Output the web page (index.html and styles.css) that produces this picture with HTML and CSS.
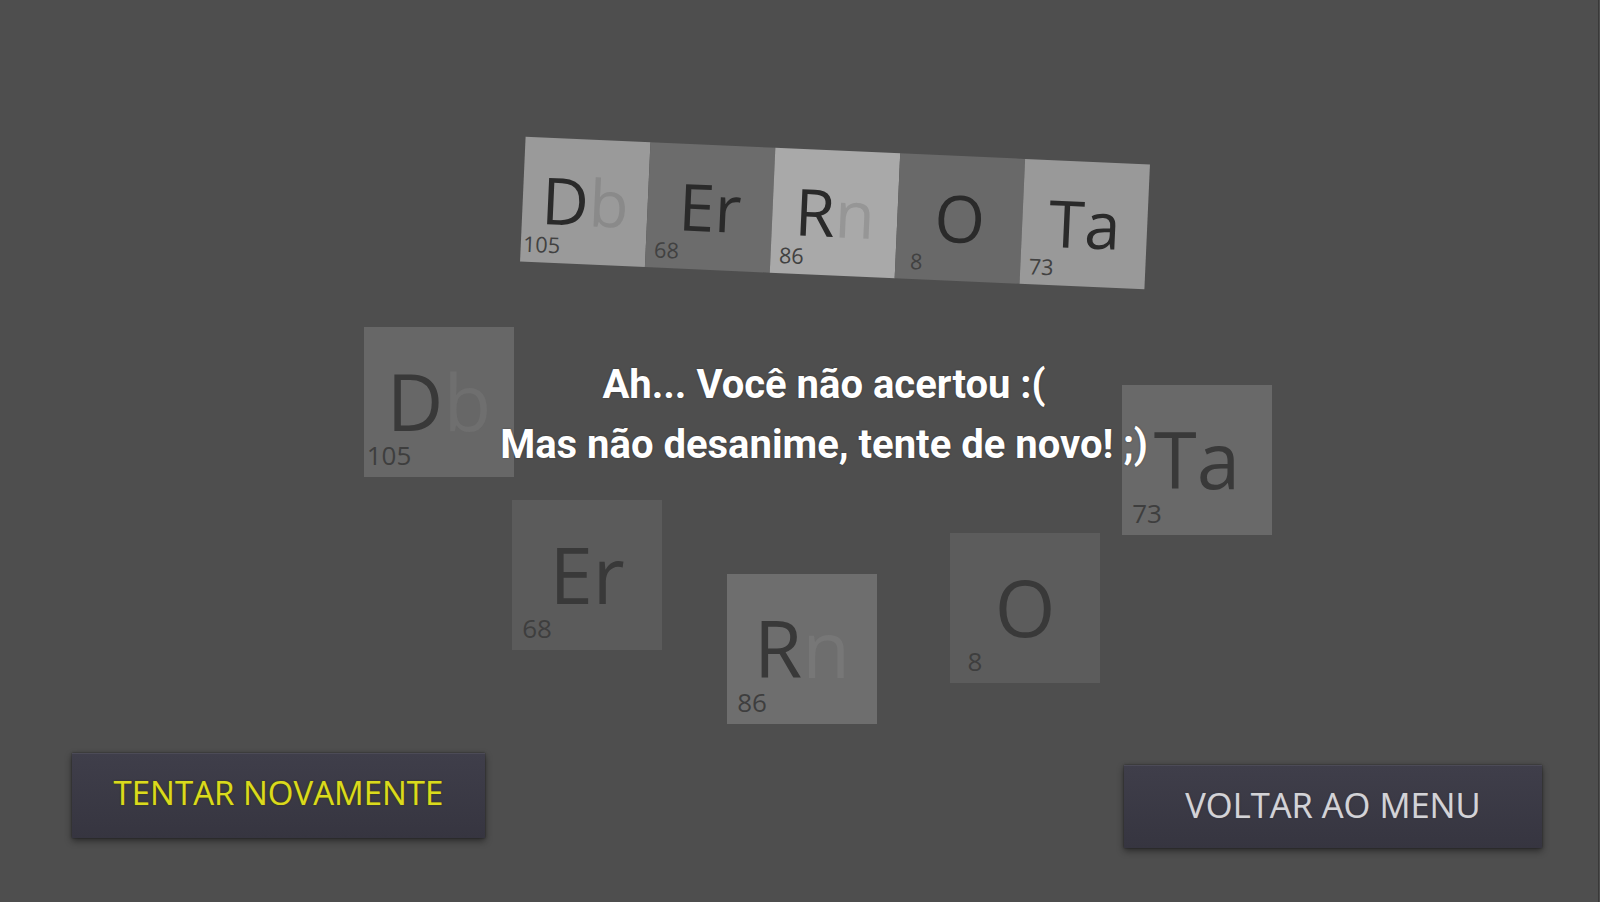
FILE: index.html
```html
<!DOCTYPE html>
<html lang="pt-BR">
<head>
<meta charset="utf-8">
<title>Derrota</title>
<link rel="stylesheet" href="styles.css">
</head>
<body>
<div class="screen">
  <section class="word">
    <div class="strip">
      <div class="tile s-db"><span class="sym">D<span class="fade">b</span></span><span class="num">105</span></div>
      <div class="tile s-er"><span class="sym">Er</span><span class="num">68</span></div>
      <div class="tile s-rn"><span class="sym">R<span class="fade">n</span></span><span class="num">86</span></div>
      <div class="tile s-o"><span class="sym">O</span><span class="num">8</span></div>
      <div class="tile s-ta"><span class="sym">Ta</span><span class="num">73</span></div>
    </div>
  </section>

  <section class="board">
    <div class="tile piece p-db"><span class="sym">D<span class="fade">b</span></span><span class="num">105</span></div>
    <div class="tile piece p-ta"><span class="sym">Ta</span><span class="num">73</span></div>
    <div class="tile piece p-er"><span class="sym">Er</span><span class="num">68</span></div>
    <div class="tile piece p-rn"><span class="sym">R<span class="fade">n</span></span><span class="num">86</span></div>
    <div class="tile piece p-o"><span class="sym">O</span><span class="num">8</span></div>
    <p class="message">Ah... Você não acertou :(<br>Mas não desanime, tente de novo! ;)</p>
  </section>

  <footer class="actions">
    <button class="btn btn-retry">TENTAR NOVAMENTE</button>
    <button class="btn btn-menu">VOLTAR AO MENU</button>
  </footer>
</div>
</body>
</html>
```

FILE: styles.css
```css
html, body {
  margin: 0;
  padding: 0;
}

body {
  width: 1600px;
  height: 902px;
  overflow: hidden;
  background: #4e4e4e;
}

.screen {
  width: 1600px;
  height: 902px;
  display: flex;
  flex-direction: column;
  background: linear-gradient(to right, #4e4e4e 1598px, #393939 1598px, #393939 1599px, #4e4e4e 1599px);
}

/* ---------- word strip ---------- */
.word {
  height: 275px;
  flex: none;
}

.strip {
  display: flex;
  width: 750px;
  height: 150px;
  margin: 138px 0 0 460px;
  transform: rotate(2.55deg) scale(0.8333);
}

/* ---------- tiles ---------- */
.tile {
  width: 150px;
  height: 150px;
  flex: none;
  font-family: "Open Sans", "DejaVu Sans", sans-serif;
  color: #2a2a2a;
}

.sym {
  display: block;
  height: 78px;
  padding-top: 35px;
  font-size: 78px;
  line-height: 78px;
  text-align: center;
  white-space: nowrap;
}

.num {
  display: block;
  width: 50px;
  margin-top: 2px;
  font-size: 26px;
  line-height: 26px;
  text-align: center;
  color: #414141;
}

.s-db { background: #9a9a9a; }
.s-er { background: #6c6c6c; }
.s-rn { background: #a9a9a9; }
.s-o  { background: #696969; }
.s-ta { background: #999999; }

.s-db .fade { color: #8a8a8a; }
.s-rn .fade { color: #969696; }

/* ---------- board ---------- */
.board {
  position: relative;
  height: 478px;
  flex: none;
}

.piece {
  position: absolute;
  color: #393939;
}

.piece .num { color: #3e3e3e; }

.p-db { left: 364px; top: 52px; background: #676767; }
.p-ta { left: 1122px; top: 110px; background: #696969; }
.p-er { left: 512px; top: 225px; background: #5b5b5b; }
.p-rn { left: 727px; top: 299px; background: #6e6e6e; }
.p-o  { left: 950px; top: 258px; background: #5c5c5c; }

.p-db .fade { color: #6f6f6f; }
.p-rn .fade { color: #777777; }

.message {
  position: relative;
  z-index: 1;
  margin: 80px 0 0 48px;
  font-family: Roboto, "Liberation Sans", sans-serif;
  font-weight: 700;
  font-size: 40px;
  line-height: 60px;
  color: #ffffff;
  text-align: center;
  text-shadow: 0 0 2px rgba(0, 0, 0, 0.35);
}

/* ---------- actions ---------- */
.actions {
  flex: 1;
  display: flex;
  justify-content: space-between;
  align-items: flex-start;
  padding: 0 58px 0 72px;
}

.btn {
  display: flex;
  align-items: center;
  justify-content: center;
  padding: 0 0 8px;
  border: 0;
  border-top: 1px solid #4c4b57;
  background: linear-gradient(#3f3e4a, #363540);
  box-shadow: 0 3px 7px rgba(0, 0, 0, 0.45), 0 0 2px rgba(0, 0, 0, 0.5);
  font-family: "Open Sans", "DejaVu Sans", sans-serif;
  font-size: 33px;
  font-weight: 400;
  cursor: pointer;
}

.btn-retry {
  width: 413px;
  height: 85px;
  color: #dada1e;
  text-shadow: 0 0 1px #6f6f00, 0 0 2px rgba(0, 0, 0, 0.4);
}

.btn-menu {
  width: 418px;
  height: 83px;
  margin-top: 12px;
  padding-bottom: 6px;
  font-size: 34.5px;
  color: #d3d3d7;
  text-shadow: 0 0 1px #77777c, 0 0 2px rgba(0, 0, 0, 0.4);
}
```
